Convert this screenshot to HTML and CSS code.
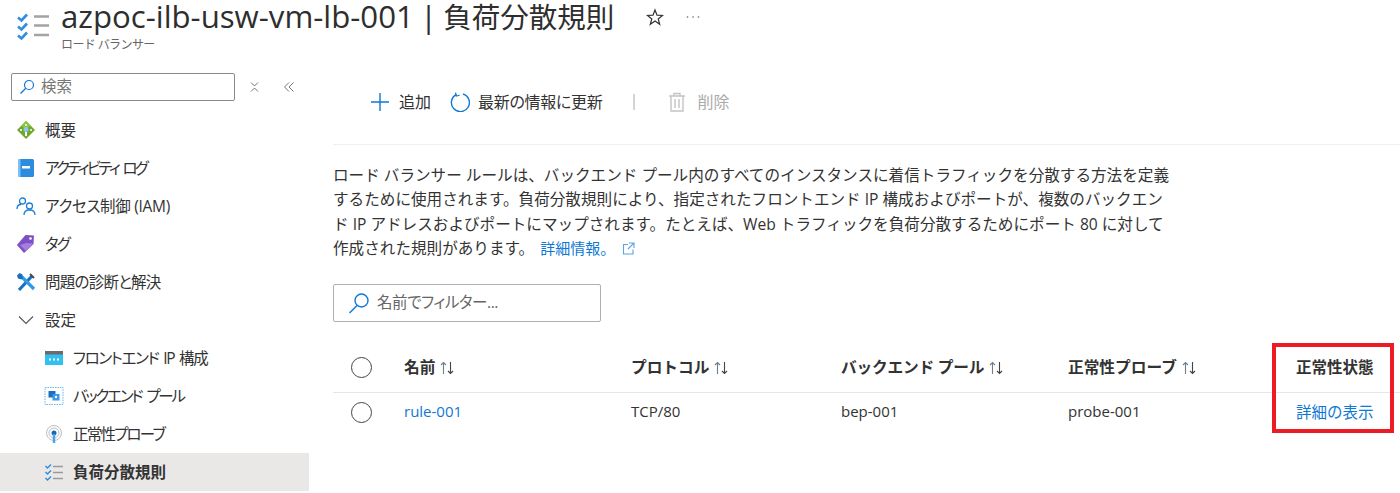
FILE: index.html
```html
<!DOCTYPE html>
<html lang="ja">
<head>
<meta charset="utf-8">
<title>負荷分散規則</title>
<link rel="stylesheet" href="styles.css">
</head>
<body>
<svg class="sprite" width="0" height="0"><symbol id="sort" viewBox="0 0 14 14"><path d="M3.500 13V1.500M1 4l2.500-2.500L6 4" fill="none" stroke="#6d7f8c" stroke-width="1.100"/><path d="M10.500 1v11.500M8 10l2.500 2.500L13 10" fill="none" stroke="#444" stroke-width="1.100"/></symbol></svg>
<header class="header">
  <svg class="header-icon" width="34" height="30" viewBox="0 0 34 30">
    <path d="M2 4.500l3.500 3L11 1.500M2 13.500l3.500 3L11 10.500M2 22.500l3.500 3L11 19.500" fill="none" stroke="#2f8ee0" stroke-width="2.600"/>
    <path d="M18 3.500h15M18 12.500h15M18 22h15" fill="none" stroke="#a3a3a3" stroke-width="2.600"/>
  </svg>
  <div class="header-text">
    <div class="title-row">
      <h1 class="title">azpoc-ilb-usw-vm-lb-001 | <span class="title-ja">負荷分散規則</span></h1>
      <svg class="star" width="18" height="18" viewBox="0 0 18 18"><path d="M9 2l2 5.200 5.500.3-4.300 3.500 1.500 5.300L9 13l-4.700 3.300 1.500-5.300-4.300-3.500 5.500-.3z" fill="none" stroke="#333" stroke-width="1.200"/></svg>
      <svg class="more" width="14" height="4" viewBox="0 0 14 4"><circle cx="1.500" cy="2" r=".8" fill="#666"/><circle cx="7" cy="2" r=".8" fill="#666"/><circle cx="12.500" cy="2" r=".8" fill="#666"/></svg>
    </div>
    <div class="subtitle">ロード バランサー</div>
  </div>
</header>
<div class="page">
  <aside class="sidebar">
    <div class="search-row">
      <div class="side-search">
        <svg width="16" height="16" viewBox="0 0 16 16"><circle cx="10" cy="6" r="4.500" fill="none" stroke="#0f78d4" stroke-width="1.200"/><path d="M6.800 9.200L1.500 14.500" stroke="#0f78d4" stroke-width="1.300"/></svg>
        <span class="up">検索</span>
      </div>
      <svg class="side-x" width="12" height="12" viewBox="0 0 12 12"><path d="M2 1.500l3.500 3.500L9 1.500M2 10.500L5.500 7 9 10.500" fill="none" stroke="#777" stroke-width="1"/></svg>
      <svg class="side-collapse" width="12" height="12" viewBox="0 0 12 12"><path d="M6 1.500L1.500 6 6 10.500M10.500 1.500L6 6l4.500 4.500" fill="none" stroke="#777" stroke-width="1"/></svg>
    </div>
    <nav class="nav">
      <div class="nav-item">
        <svg width="20" height="20" viewBox="0 0 20 20"><path d="M10 1l9 9-9 9-9-9z" fill="#6fa82a"/><path d="M10 1l4.500 4.500-4.500 4.500-4.500-4.500z" fill="#8cc63f"/><circle cx="10" cy="9.500" r="2.500" fill="#8cc6f5"/><path d="M10 12v4" stroke="#fff" stroke-width="2"/><path d="M4 10h2M14 10h2M9 5h2" stroke="#fff" stroke-width="1.500"/></svg>
        <span class="nav-label">概要</span>
      </div>
      <div class="nav-item">
        <svg width="20" height="20" viewBox="0 0 20 20"><rect x="2" y="1" width="16" height="18" rx="1.500" fill="#2c8ce0"/><rect x="2" y="1" width="2.500" height="18" fill="#7cc0f5"/><rect x="6" y="8" width="8" height="2.500" fill="#fff"/></svg>
        <span class="nav-label ls-xl">アクティビティ ログ</span>
      </div>
      <div class="nav-item">
        <svg width="20" height="20" viewBox="0 0 20 20"><g fill="none" stroke="#1f7fd8" stroke-width="1.300"><circle cx="6.500" cy="5" r="3"/><circle cx="13.500" cy="10" r="3"/><path d="M1 13c0-3 2-4.500 4-4.500M8 19c0-3.500 2.500-5 5.500-5s5.500 1.500 5.500 5"/></g></svg>
        <span class="nav-label ls-s">アクセス制御 (IAM)</span>
      </div>
      <div class="nav-item">
        <svg width="20" height="20" viewBox="0 0 20 20"><path d="M9 1h8.500v8.500L8.500 19 1 11.500z" transform="rotate(3 10 10)" fill="#7c4fc4"/><path d="M4 11l6 6 7-7.500-6.500-.5z" fill="#a67ee0"/><circle cx="14.500" cy="4.500" r="1.300" fill="#fff"/></svg>
        <span class="nav-label ls-l">タグ</span>
      </div>
      <div class="nav-item">
        <svg width="20" height="20" viewBox="0 0 20 20"><path d="M3 18L16 4" stroke="#1a6fc0" stroke-width="3.200"/><path d="M14 2l4 4" stroke="#4a4a4a" stroke-width="2"/><path d="M18 17L6 5" stroke="#2f9ae8" stroke-width="3.200"/><path d="M1 3.500L3.500 1 6.500 2.500 7 6 5.500 7.500 2 6.500z" fill="#1a6fc0"/></svg>
        <span class="nav-label ls-m">問題の診断と解決</span>
      </div>
      <div class="nav-item">
        <svg class="chevron" width="20" height="20" viewBox="0 0 20 20"><path d="M3 6.500l7 7 7-7" fill="none" stroke="#555" stroke-width="1.100"/></svg>
        <span class="nav-label">設定</span>
      </div>
      <div class="nav-item nav-sub">
        <svg width="20" height="20" viewBox="0 0 20 20"><rect x="1" y="3" width="18" height="14" fill="#32c0f0"/><rect x="1" y="3" width="18" height="3.500" fill="#6b6b6b"/><path d="M5 11.500h2M9 11.500h2M13 11.500h2" stroke="#fff" stroke-width="1.800"/></svg>
        <span class="nav-label ls-front">フロントエンド IP 構成</span>
      </div>
      <div class="nav-item nav-sub">
        <svg width="20" height="20" viewBox="0 0 20 20"><rect x="1" y="1.500" width="18" height="17" fill="none" stroke="#6ab4ee" stroke-width="1" stroke-dasharray="1.500 1"/><rect x="4.500" y="5" width="7" height="6.500" fill="#1a6fc0"/><rect x="8.500" y="8" width="7" height="6.500" fill="#3a9ae8"/><circle cx="12" cy="11" r="1.200" fill="#fff"/></svg>
        <span class="nav-label ls-pool">バックエンド プール</span>
      </div>
      <div class="nav-item nav-sub">
        <svg width="20" height="20" viewBox="0 0 20 20"><g fill="none" stroke="#bdbdbd" stroke-width="1"><circle cx="10" cy="9" r="7.500"/><circle cx="10" cy="9" r="5"/></g><circle cx="10" cy="9" r="2.500" fill="#0f6cbd"/><path d="M10 10v9" stroke="#4aa3e8" stroke-width="2.400"/></svg>
        <span class="nav-label ls-l">正常性プローブ</span>
      </div>
      <div class="nav-item nav-sub nav-active">
        <svg width="20" height="20" viewBox="0 0 20 20"><path d="M1.500 4l2 2L7 2.500M1.500 10l2 2L7 8.500M1.500 16l2 2L7 14.500" fill="none" stroke="#2f8ee0" stroke-width="1.500"/><path d="M9 4.500h10M9 10.500h10M9 16.500h10" stroke="#9a9a9a" stroke-width="1.700"/></svg>
        <span class="nav-label">負荷分散規則</span>
      </div>
    </nav>
  </aside>
  <main class="main">
    <div class="toolbar">
      <div class="tool">
        <svg width="20" height="20" viewBox="0 0 20 20"><path d="M10 1v18M1 10h18" stroke="#0f78d4" stroke-width="1.400"/></svg>
        <span class="up">追加</span>
      </div>
      <div class="tool tool-refresh">
        <svg width="20" height="20" viewBox="0 0 20 20"><path d="M6.500 2.500A9 9 0 1 0 13 2" fill="none" stroke="#0f78d4" stroke-width="1.400"/><path d="M6 0.500V4h3.500" fill="none" stroke="#0f78d4" stroke-width="1.200" transform="rotate(-12 6 3)"/></svg>
        <span class="up refresh-label">最新の情報に更新</span>
      </div>
      <div class="tool-sep"></div>
      <div class="tool tool-disabled">
        <svg width="18" height="20" viewBox="0 0 18 20"><path d="M1 4h16M6 4V1.500h6V4M3 4v15h12V4M7 7v9M11 7v9" fill="none" stroke="#c4c4c4" stroke-width="1.400"/></svg>
        <span class="up">削除</span>
      </div>
    </div>
    <div class="content">
      <p class="desc">ロード バランサー ルールは、バックエンド プール内のすべてのインスタンスに着信トラフィックを分散する方法を定義<br>するために使用されます。負荷分散規則により、指定されたフロントエンド IP 構成およびポートが、複数のバックエン<br>ド IP アドレスおよびポートにマップされます。たとえば、Web トラフィックを負荷分散するためにポート 80 に対して<br>作成された規則があります。 <a class="link learn" href="#">詳細情報。<svg width="13" height="13" viewBox="0 0 13 13"><path d="M6 2.500H1.500v9.500h9.500V7.500M7 1h5v5M12 1L6 7" fill="none" stroke="#5ba5e6" stroke-width="1.100"/></svg></a></p>
      <div class="filter">
        <svg width="22" height="22" viewBox="0 0 22 22"><circle cx="13.500" cy="8.500" r="6.500" fill="none" stroke="#0f78d4" stroke-width="1.400"/><path d="M9 13.500L1.500 21" stroke="#0f78d4" stroke-width="1.500"/></svg>
        <span class="up">名前でフィルター...</span>
      </div>
      <div class="table">
        <div class="row row-head">
          <span class="radio"></span>
          <span class="cell"><span class="up">名前</span><svg class="sort"><use href="#sort"/></svg></span>
          <span class="cell"><span class="up">プロトコル</span><svg class="sort"><use href="#sort"/></svg></span>
          <span class="cell"><span class="up tight-head">バックエンド プール</span><svg class="sort"><use href="#sort"/></svg></span>
          <span class="cell"><span class="up">正常性プローブ</span><svg class="sort"><use href="#sort"/></svg></span>
          <span class="cell"><span class="up health-head">正常性状態</span></span>
        </div>
        <div class="row row-body">
          <span class="radio"></span>
          <a class="cell link up" href="#">rule-001</a>
          <span class="cell up">TCP/80</span>
          <span class="cell up">bep-001</span>
          <span class="cell up">probe-001</span>
          <a class="cell link up detail" href="#">詳細の表示</a>
        </div>
        <div class="highlight"></div>
      </div>
    </div>
  </main>
</div>
</body>
</html>
```

FILE: styles.css
```css
* { box-sizing: border-box; }
html, body { margin: 0; height: 493px; overflow: hidden; background: #fff; }
body {
  font-family: "Open Sans", "Noto Sans CJK JP", sans-serif;
  font-size: 15px;
  color: #333;
}
svg { display: block; flex: none; }
.sprite { position: absolute; }
.up { display: inline-block; padding-bottom: 3px; }

.header { display: flex; height: 62px; padding-left: 16px; }
.header-icon { margin-top: 13px; }
.header-text { margin-left: 11px; }
.title-row { display: flex; align-items: center; height: 32px; }
.title { margin: 0; font-size: 31.200px; font-weight: 400; line-height: 32px; word-spacing: -2px; color: #2e2e2e; white-space: nowrap; }
.title-ja { font-size: 28.500px; }
.star { margin-left: 32px; margin-top: 2px; }
.more { margin-left: 22px; margin-top: 1px; }
.subtitle { font-size: 12px; color: #666; line-height: 18px; margin-top: 4px; letter-spacing: -.6px; }

.page { display: flex; height: 431px; }
.sidebar { width: 309px; flex: none; padding-top: 11px; }
.search-row { display: flex; align-items: center; padding-left: 11px; height: 28px; }
.side-search {
  width: 224px; height: 28px; display: flex; align-items: center; gap: 6px; padding-left: 7px;
  border: 1px solid #8a8a8a; border-radius: 2px; color: #777; font-size: 15.500px;
}
.side-x { margin-left: 14px; }
.side-collapse { margin-left: 22px; }

.nav { margin-top: 10px; }
.nav-item { height: 38px; display: flex; align-items: center; gap: 9px; padding-left: 16px; white-space: nowrap; font-size: 15.500px; font-feature-settings: "palt"; }
.nav-label { display: inline-block; padding-bottom: 1px; }
.nav-sub { padding-left: 44px; }
.nav-active { background: #e9e8e7; font-weight: 700; font-feature-settings: normal; }
.ls-s { letter-spacing: -.3px; }
.ls-m { letter-spacing: -.75px; }
.ls-front { letter-spacing: -1.300px; word-spacing: 2px; }
.ls-l { letter-spacing: -1.800px; }
.ls-pool { letter-spacing: -2.200px; word-spacing: 3px; }
.ls-xl { letter-spacing: -2.700px; word-spacing: 3px; }

.main { flex: 1; min-width: 0; padding-left: 24px; }
.toolbar { display: flex; align-items: center; height: 83px; padding: 0 0 2px 37px; border-bottom: 1px solid #f0f0f0; font-size: 16px; font-feature-settings: "palt"; }
.tool { display: flex; align-items: center; gap: 9px; white-space: nowrap; }
.tool-refresh { margin-left: 19px; gap: 8px; }
.refresh-label { letter-spacing: -.3px; }
.tool-sep { width: 2px; height: 16px; background: #d4d4d4; margin: 0 33px 0 31px; }
.tool-disabled { color: #aaa; gap: 11px; }

.content { padding-top: 18px; }
.desc { margin: 0; width: 850px; line-height: 24.300px; font-size: 15.600px; white-space: nowrap; }
.link { color: #0f78d4; text-decoration: none; }
.learn { margin-left: 2px; display: inline-flex; align-items: center; gap: 7px; font-size: 15px; }

.filter {
  width: 268px; height: 38px; margin-top: 24px; display: flex; align-items: center; gap: 7px; padding-left: 14px;
  border: 1px solid #b0b0b0; border-radius: 2px; color: #666; font-size: 15.500px; font-feature-settings: "palt"; letter-spacing: -.4px;
}

.table { position: relative; margin-top: 21px; }
.row { display: grid; grid-template-columns: 71px 227px 210px 227px 228px 1fr; align-items: center; }
.row-head { height: 50px; border-bottom: 1px solid #e6e6e6; font-weight: 700; font-size: 15.700px; }
.row-body { height: 39px; }
.radio { width: 21px; height: 21px; margin-left: 18px; border: 1.500px solid #444; border-radius: 50%; }
.cell { white-space: nowrap; display: flex; align-items: center; gap: 5px; }
.tight-head { letter-spacing: -.2px; }
.health-head { font-size: 15.500px; }
.detail { font-size: 15.500px; }
.sort { width: 14px; height: 14px; }
.highlight { position: absolute; left: 939px; top: 0; width: 122px; height: 90px; border: 4px solid #ed1c24; }
```
